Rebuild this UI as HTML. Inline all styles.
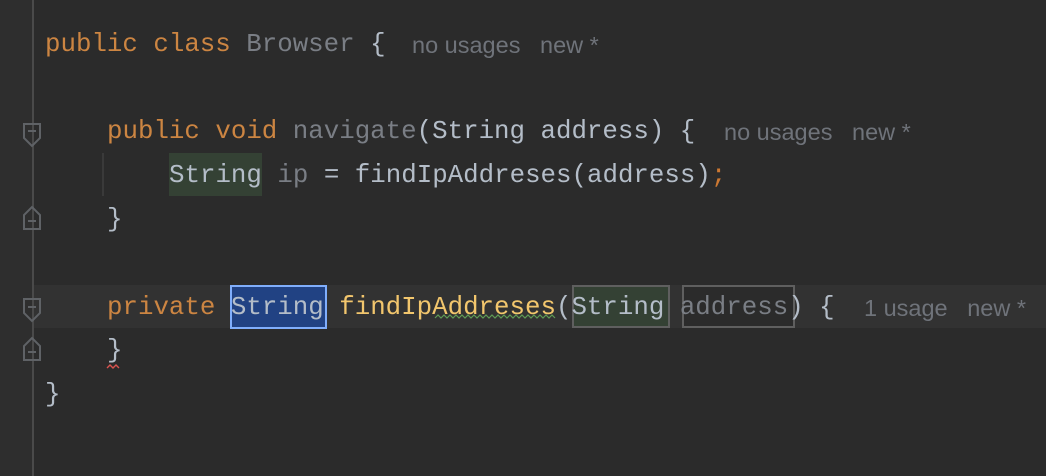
<!DOCTYPE html>
<html><head><style>
body{margin:0;width:1046px;height:476px;background:#2b2b2b;overflow:hidden;position:relative;font-family:"Liberation Mono",monospace;}
.gut{position:absolute;left:0;top:0;width:32px;height:476px;background:#2e2e2e;}
.gl{position:absolute;left:32px;top:0;width:2px;height:476px;background:#4a4a4a;}
.cur{position:absolute;left:34px;top:285px;width:1012px;height:43px;background:#323232;}
.ln{position:absolute;font-size:25.8px;line-height:44px;height:44px;white-space:pre;color:#b4bdc8;}
.k{color:#cc8542}.g{color:#7a7e85}.y{color:#f2c66d}.o{color:#cc7832}
.h{position:absolute;font-family:"Liberation Sans",sans-serif;font-size:23.5px;color:#6f737a;line-height:44px;white-space:pre;}
.box{position:absolute;box-sizing:border-box;}
</style></head><body>
<div class="gut"></div><div class="gl"></div>
<div class="cur"></div>
<div class="box" style="left:169px;top:153px;width:93px;height:43px;background:#344134"></div>
<div class="box" style="left:230px;top:285px;width:97px;height:44px;background:#214283;border:2px solid #80aefc"></div>
<div class="box" style="left:572px;top:285px;width:98px;height:43px;background:#344134;border:2px solid #5f5f5f"></div>
<div class="box" style="left:682px;top:285px;width:113px;height:43px;background:#2b2b2b;border:2px solid #5f5f5f"></div>
<div style="position:absolute;left:102px;top:153px;width:2px;height:43px;background:#3a3a3a"></div>

<div class="ln" style="left:45px;top:23px"><span class="k">public class </span><span class="g">Browser</span> {</div>
<div class="h" style="left:412px;top:23px">no usages   new *</div>
<div class="ln" style="left:107px;top:110px"><span class="k">public void </span><span class="g">navigate</span>(String address) {</div>
<div class="h" style="left:724px;top:110px">no usages   new *</div>
<div class="ln" style="left:169px;top:154px">String <span class="g">ip</span> = findIpAddreses(address)<span class="o">;</span></div>
<div class="ln" style="left:107px;top:198px">}</div>
<div class="ln" style="left:107px;top:286px"><span class="k">private </span>String <span class="y">findIpAddreses</span>(String <span class="g">address</span>) {</div>
<div class="h" style="left:864px;top:286px">1 usage   new *</div>
<div class="ln" style="left:107px;top:329px">}</div>
<div class="ln" style="left:45px;top:373px">}</div>

<svg style="position:absolute;left:0;top:0" width="1046" height="476">
<g fill="none" stroke="#5f6266" stroke-width="2">
<path d="M24 124h16v14l-8 8l-8-8z"/><path d="M28 131h8"/>
<path d="M24 229h16v-14l-8-8l-8 8z"/><path d="M28 221h8"/>
<path d="M24 299h16v14l-8 8l-8-8z"/><path d="M28 307h8"/>
<path d="M24 360h16v-14l-8-8l-8 8z"/><path d="M28 352h8"/>
</g>
<path d="M435 318 l3 -3 l3 3 l3 -3 l3 3 l3 -3 l3 3 l3 -3 l3 3 l3 -3 l3 3 l3 -3 l3 3 l3 -3 l3 3 l3 -3 l3 3 l3 -3 l3 3 l3 -3 l3 3 l3 -3 l3 3 l3 -3 l3 3 l3 -3 l3 3 l3 -3 l3 3 l3 -3 l3 3 l3 -3 l3 3 l3 -3 l3 3 l3 -3 l3 3 l3 -3 l3 3 l3 -3 l3 3" fill="none" stroke="#5f9a55" stroke-width="1.2"/>
<path d="M107 368 l3 -3 l3 3 l3 -3 l3 3" fill="none" stroke="#d9534f" stroke-width="1.4"/>
</svg>
</body></html>
